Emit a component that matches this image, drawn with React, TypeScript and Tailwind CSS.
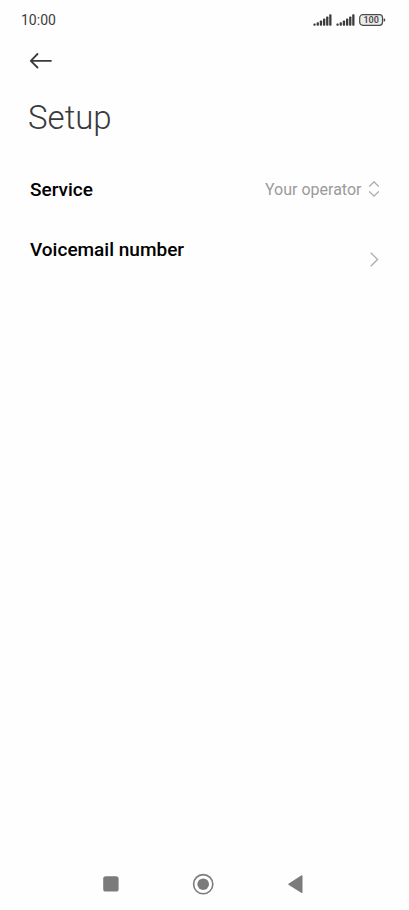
interface IconProps {
  className?: string;
}

const operators = ["Your operator", "Custom"];

function SignalIcon({ className }: IconProps) {
  return (
    <svg width="19" height="12" viewBox="0 0 19 12" fill="currentColor" className={className} aria-hidden="true">
      <rect x="0.4" y="9.6" width="2.3" height="2.2" rx="0.8" />
      <rect x="3.6" y="8.2" width="2.3" height="3.6" rx="0.8" />
      <rect x="6.8" y="6.4" width="2.3" height="5.4" rx="0.8" />
      <rect x="10" y="4.5" width="2.3" height="7.3" rx="0.8" />
      <rect x="13.1" y="2.4" width="2.3" height="9.4" rx="0.8" />
      <rect x="16.2" y="0.2" width="2.3" height="11.6" rx="0.8" />
    </svg>
  );
}

function BatteryIcon({ level }: { level: number }) {
  return (
    <svg width="27" height="12" viewBox="0 0 27 12" className="text-[#4a4a4a]" role="img" aria-label={`Battery ${level}%`}>
      <rect x="0.7" y="0.7" width="22.8" height="10.6" rx="3" fill="#ececec" stroke="currentColor" strokeWidth="1.2" />
      <path d="M24.6 4.2c1.2.2 1.7.8 1.7 1.8s-.5 1.6-1.7 1.8z" fill="currentColor" />
      <text x="12.1" y="9.2" textAnchor="middle" fill="currentColor" className="text-[9px] font-semibold">
        {level}
      </text>
    </svg>
  );
}

function StatusBar() {
  return (
    <div className="flex h-10 items-center justify-between pr-[23px] pl-[21px] text-[#3c3c3c]">
      <span className="text-sm">10:00</span>
      <div className="flex items-center">
        <SignalIcon className="mr-1" />
        <SignalIcon className="mr-1" />
        <BatteryIcon level={100} />
      </div>
    </div>
  );
}

function ServiceRow() {
  return (
    <div className="flex h-[60px] items-center justify-between">
      <label htmlFor="service" className="text-[19px] font-medium">
        Service
      </label>
      <div className="relative flex items-center text-[#9a9a9a]">
        <select id="service" className="appearance-none bg-transparent pr-[18px] text-base outline-none">
          {operators.map((name) => (
            <option key={name}>{name}</option>
          ))}
        </select>
        <svg
          width="12"
          height="18"
          viewBox="0 0 12 18"
          fill="none"
          stroke="#a8a8a8"
          strokeWidth="1.3"
          className="pointer-events-none absolute right-0"
          aria-hidden="true"
        >
          <path d="M1.2 5.6 6 .8l4.8 4.8M1.2 10.4 6 15.2l4.8-4.8" />
        </svg>
      </div>
    </div>
  );
}

function VoicemailRow() {
  return (
    <button className="flex h-20 w-full items-center justify-between text-left">
      <span className="flex flex-col">
        <span className="text-[19px] leading-6 font-medium">Voicemail number</span>
        <span className="h-5" />
      </span>
      <svg width="12" height="16" viewBox="0 0 12 16" fill="none" stroke="#a8a8a8" strokeWidth="1.2" aria-hidden="true">
        <path d="M2.7.7 9.6 7.5l-6.9 6.8" />
      </svg>
    </button>
  );
}

function NavBar() {
  return (
    <nav className="flex h-[52px] items-center justify-center gap-[70px] pr-[3px] text-[#7b7b7b]">
      <button aria-label="Recent apps">
        <svg width="22" height="22" viewBox="0 0 22 22" fill="currentColor">
          <rect x="3.2" y="3.2" width="15.4" height="15.4" rx="2.6" />
        </svg>
      </button>
      <button aria-label="Home">
        <svg width="22" height="22" viewBox="0 0 22 22" fill="currentColor">
          <circle cx="11.2" cy="11.2" r="9.6" fill="none" stroke="currentColor" strokeWidth="1.6" />
          <circle cx="11.2" cy="11.2" r="5.8" />
        </svg>
      </button>
      <button aria-label="Back">
        <svg width="22" height="22" viewBox="0 0 22 22" fill="currentColor">
          <path d="M17.2 2.6c.8-.5 1.3-.2 1.3.6v16c0 .8-.5 1.1-1.3.6L4.8 12c-.6-.4-.6-1.2 0-1.6z" />
        </svg>
      </button>
    </nav>
  );
}

export default function App() {
  return (
    <div className="flex min-h-screen flex-col bg-[#fefefe] font-[Roboto,sans-serif] text-black">
      <StatusBar />
      <header className="px-7 text-[#3a3a3a]">
        <button aria-label="Go back" className="flex h-[42px] items-center">
          <svg
            width="24"
            height="18"
            viewBox="0 0 24 18"
            fill="none"
            stroke="currentColor"
            strokeWidth="1.8"
            strokeLinecap="round"
            strokeLinejoin="round"
          >
            <path d="M23 8.8H3M9.5 2 2.8 8.8l6.7 6.7" />
          </svg>
        </button>
        <h1 className="pt-4 text-[33px] leading-10 font-light">Setup</h1>
      </header>
      <main className="grow pt-[22px] pr-[29px] pl-[30px]">
        <ServiceRow />
        <VoicemailRow />
      </main>
      <NavBar />
    </div>
  );
}
